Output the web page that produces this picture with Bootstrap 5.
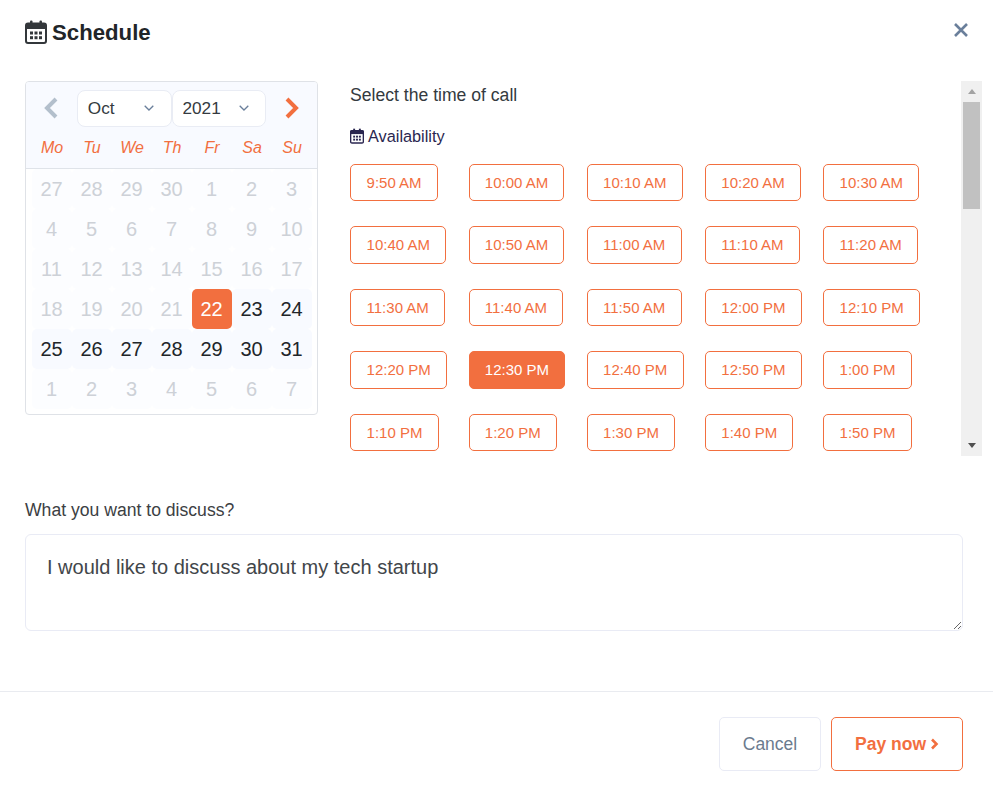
<!DOCTYPE html>
<html lang="en">
<head>
<meta charset="utf-8">
<title>Schedule</title>
<link rel="stylesheet" href="https://cdn.jsdelivr.net/npm/bootstrap@5.3.0/dist/css/bootstrap.min.css">
<style>
html,body{height:100%;background:#fff;font-family:"Liberation Sans",Arial,sans-serif;color:#212529}
.sheet{width:993px;height:794px;border:0;border-radius:0;overflow:hidden}
.sheet-head{height:64px;padding:0 25px;border:0;margin-bottom:17px}
.sheet-title{font-size:22.2px;font-weight:700;line-height:1;color:#212529;gap:5px;margin:0}
.sheet-title span{position:relative;top:1px}
.close-x{background:none;border:0;padding:0;width:16px;height:16px;margin:-14px -1px 0 0;display:block}
.sheet-body{padding:0 0 0 25px;flex:none}
.top-row{gap:32px;height:375px}
.cal{width:293px;height:334px;border:1px solid #dfe2e7;border-radius:4px;background:#fff;overflow:hidden}
.cal-top{height:87px;background:#f8faff;border-bottom:1px solid #dfe3e9;padding-top:7px}
.cal-nav{height:38px}
.cal-arrow{width:51px;height:38px;background:none;border:0;padding:0}
.cal-select{width:95px;height:37px;padding:0 0 0 10px;font-size:17.2px;line-height:35px;color:#343a40;border:1px solid #e9ecf4;border-radius:8px;background-color:#fff;background-image:url("data:image/svg+xml,%3csvg xmlns='http://www.w3.org/2000/svg' viewBox='0 0 10 6'%3e%3cpath fill='none' stroke='%236a7f9b' stroke-width='1.3' d='M.7.7 5 5 9.3.7'/%3e%3c/svg%3e");background-position:right 16.5px center;background-size:10px 6px;font-family:inherit}
.cal-week{display:grid;grid-template-columns:repeat(7,40px);padding-left:6px;margin-top:2px}
.cal-week span{text-align:center;font-style:italic;font-size:16px;line-height:38px;color:#f26f3f}
.cal-grid{display:grid;grid-template-columns:repeat(7,40px);grid-auto-rows:40px;padding-left:6px}
.day{display:flex;align-items:center;justify-content:center;font-size:20px;color:#212529;background:#f8faff;border-radius:5px;padding-right:1px}
.day.off{color:#cdd1d7;background:#fcfdff}
.day.on{background:#f26f3f;color:#fff}
.times-wrap{width:632px;height:375px}
.times{flex:1;min-width:0;overflow:hidden}
.times-h{font-size:17.6px;line-height:24px;color:#343a40;margin:2px 0 0}
.avail{font-size:16.3px;line-height:24px;color:#2a2650;gap:4px;margin:17px 0 0;height:24px}
.slots{display:grid;grid-template-columns:repeat(5,118.25px);row-gap:25px;margin:15.7px 0 0 .3px;justify-items:start}
.slot{--bs-btn-padding-x:15.25px;--bs-btn-padding-y:7.25px;--bs-btn-font-size:15px;--bs-btn-line-height:21px;--bs-btn-color:#f26f3f;--bs-btn-border-color:#f26f3f;--bs-btn-border-radius:5px;--bs-btn-bg:#fff;white-space:nowrap;font-family:inherit}
.slot.picked{background:#f26f3f;color:#fff}
.fake-bar{width:21px;background:#f0f0f0;height:375px;align-items:center;flex:none}
.bar-btn{height:21px;width:100%;display:flex;align-items:center;justify-content:center;flex:none}
.tri-up{width:0;height:0;border-left:4.5px solid transparent;border-right:4.5px solid transparent;border-bottom:5px solid #a3a3a3}
.tri-down{width:0;height:0;border-left:4.5px solid transparent;border-right:4.5px solid transparent;border-top:5px solid #505050}
.bar-thumb{width:17px;height:107px;background:#c1c1c1;flex:none}
.ask-wrap{width:938px;margin-top:42px}
.ask-label{font-size:17.6px;line-height:24px;color:#3c4043;margin:0 0 12px}
.ask{height:97px;padding:15px 21px;font-size:20px;line-height:34px;border:1px solid #e9ebf5;border-radius:6px;color:#42464a;font-family:inherit;box-shadow:none;resize:vertical}
.sheet-foot{position:static;margin-top:60px;height:103px;padding:25px 30px 23px 0;border-top:1px solid #e9ebf0;gap:10px;justify-content:flex-end;align-items:flex-start;flex-wrap:nowrap}
.sheet-foot>*{margin:0}
.act{height:54px;font-size:17.5px;border-radius:5px;padding:0;font-family:inherit}
.act-cancel{width:102px;border:1px solid #e9ebf5;color:#6b7b8e;background:#fff}
.act-pay{width:132px;border:1px solid #f26f3f;color:#f26f3f;background:#fff;font-weight:700;gap:4px}
</style>
</head>
<body>
<div class="modal-content sheet d-flex flex-column">
  <div class="modal-header sheet-head d-flex align-items-center justify-content-between">
    <h5 class="modal-title sheet-title d-flex align-items-center">
      <svg width="22" height="24" viewBox="0 0 22 24" aria-hidden="true"><rect x="1" y="3.5" width="20" height="19.5" rx="2" fill="none" stroke="#33373b" stroke-width="2"/><rect x="1" y="3.5" width="20" height="5.5" fill="#33373b"/><rect x="5" y="0.5" width="2.5" height="5" rx="1" fill="#33373b"/><rect x="14.5" y="0.5" width="2.5" height="5" rx="1" fill="#33373b"/><g fill="#33373b"><rect x="5" y="11.5" width="3" height="3"/><rect x="9.5" y="11.5" width="3" height="3"/><rect x="14" y="11.5" width="3" height="3"/><rect x="5" y="16.2" width="3" height="3"/><rect x="9.5" y="16.2" width="3" height="3"/><rect x="14" y="16.2" width="3" height="3"/></g></svg>
      <span>Schedule</span>
    </h5>
    <button class="close-x" type="button" aria-label="Close"><svg width="16" height="16" viewBox="0 0 16 16" aria-hidden="true"><path d="M2 2 14 14M14 2 2 14" stroke="#6a7f9b" stroke-width="2.6" fill="none"/></svg></button>
  </div>
  <div class="modal-body sheet-body">
    <div class="d-flex top-row">
      <div class="cal flex-shrink-0">
        <div class="cal-top">
          <div class="cal-nav d-flex align-items-center">
            <button class="cal-arrow d-flex align-items-center justify-content-center" type="button" aria-label="Previous month"><svg width="16" height="22" viewBox="0 0 16 22" aria-hidden="true"><path d="M13 2 4 11l9 9" fill="none" stroke="#b3bfcc" stroke-width="4"/></svg></button>
            <select class="form-select cal-select"><option>Oct</option></select>
            <select class="form-select cal-select"><option>2021</option></select>
            <button class="cal-arrow d-flex align-items-center justify-content-center" type="button" aria-label="Next month"><svg width="16" height="22" viewBox="0 0 16 22" aria-hidden="true"><path d="M3 2l9 9-9 9" fill="none" stroke="#f26f3f" stroke-width="4"/></svg></button>
          </div>
          <div class="cal-week"><span>Mo</span><span>Tu</span><span>We</span><span>Th</span><span>Fr</span><span>Sa</span><span>Su</span></div>
        </div>
        <div class="cal-grid">
          <div class="day off">27</div><div class="day off">28</div><div class="day off">29</div><div class="day off">30</div><div class="day off">1</div><div class="day off">2</div><div class="day off">3</div>
          <div class="day off">4</div><div class="day off">5</div><div class="day off">6</div><div class="day off">7</div><div class="day off">8</div><div class="day off">9</div><div class="day off">10</div>
          <div class="day off">11</div><div class="day off">12</div><div class="day off">13</div><div class="day off">14</div><div class="day off">15</div><div class="day off">16</div><div class="day off">17</div>
          <div class="day off">18</div><div class="day off">19</div><div class="day off">20</div><div class="day off">21</div><div class="day on">22</div><div class="day">23</div><div class="day">24</div>
          <div class="day">25</div><div class="day">26</div><div class="day">27</div><div class="day">28</div><div class="day">29</div><div class="day">30</div><div class="day">31</div>
          <div class="day off">1</div><div class="day off">2</div><div class="day off">3</div><div class="day off">4</div><div class="day off">5</div><div class="day off">6</div><div class="day off">7</div>
        </div>
      </div>
      <div class="d-flex times-wrap">
        <div class="times">
          <p class="times-h">Select the time of call</p>
          <p class="avail d-flex align-items-center"><svg width="14" height="16" viewBox="0 0 22 24" aria-hidden="true"><rect x="1" y="3.5" width="20" height="19.5" rx="2" fill="none" stroke="#2a2650" stroke-width="2.2"/><rect x="1" y="3.5" width="20" height="5.5" fill="#2a2650"/><rect x="5" y="0.5" width="3" height="5" fill="#2a2650"/><rect x="14" y="0.5" width="3" height="5" fill="#2a2650"/><g fill="#2a2650"><rect x="5" y="11.5" width="3" height="3"/><rect x="9.5" y="11.5" width="3" height="3"/><rect x="14" y="11.5" width="3" height="3"/><rect x="5" y="16.2" width="3" height="3"/><rect x="9.5" y="16.2" width="3" height="3"/><rect x="14" y="16.2" width="3" height="3"/></g></svg>Availability</p>
          <div class="slots">
            <button type="button" class="btn btn-outline-primary slot">9:50 AM</button>
            <button type="button" class="btn btn-outline-primary slot">10:00 AM</button>
            <button type="button" class="btn btn-outline-primary slot">10:10 AM</button>
            <button type="button" class="btn btn-outline-primary slot">10:20 AM</button>
            <button type="button" class="btn btn-outline-primary slot">10:30 AM</button>
            <button type="button" class="btn btn-outline-primary slot">10:40 AM</button>
            <button type="button" class="btn btn-outline-primary slot">10:50 AM</button>
            <button type="button" class="btn btn-outline-primary slot">11:00 AM</button>
            <button type="button" class="btn btn-outline-primary slot">11:10 AM</button>
            <button type="button" class="btn btn-outline-primary slot">11:20 AM</button>
            <button type="button" class="btn btn-outline-primary slot">11:30 AM</button>
            <button type="button" class="btn btn-outline-primary slot">11:40 AM</button>
            <button type="button" class="btn btn-outline-primary slot">11:50 AM</button>
            <button type="button" class="btn btn-outline-primary slot">12:00 PM</button>
            <button type="button" class="btn btn-outline-primary slot">12:10 PM</button>
            <button type="button" class="btn btn-outline-primary slot">12:20 PM</button>
            <button type="button" class="btn btn-outline-primary slot picked">12:30 PM</button>
            <button type="button" class="btn btn-outline-primary slot">12:40 PM</button>
            <button type="button" class="btn btn-outline-primary slot">12:50 PM</button>
            <button type="button" class="btn btn-outline-primary slot">1:00 PM</button>
            <button type="button" class="btn btn-outline-primary slot">1:10 PM</button>
            <button type="button" class="btn btn-outline-primary slot">1:20 PM</button>
            <button type="button" class="btn btn-outline-primary slot">1:30 PM</button>
            <button type="button" class="btn btn-outline-primary slot">1:40 PM</button>
            <button type="button" class="btn btn-outline-primary slot">1:50 PM</button>
          </div>
        </div>
        <div class="fake-bar d-flex flex-column">
          <div class="bar-btn"><span class="tri-up"></span></div>
          <div class="bar-thumb"></div>
          <div class="flex-grow-1"></div>
          <div class="bar-btn"><span class="tri-down"></span></div>
        </div>
      </div>
    </div>
    <div class="ask-wrap">
      <label class="form-label ask-label d-block" for="ask">What you want to discuss?</label>
      <textarea class="form-control ask" id="ask">I would like to discuss about my tech startup</textarea>
    </div>
  </div>
  <div class="modal-footer sheet-foot d-flex">
    <button type="button" class="btn act act-cancel">Cancel</button>
    <button type="button" class="btn act act-pay d-flex align-items-center justify-content-center">Pay now<svg width="9" height="12" viewBox="0 0 9 12" aria-hidden="true"><path d="M2 1.5 6.5 6 2 10.5" fill="none" stroke="#f26f3f" stroke-width="2.6"/></svg></button>
  </div>
</div>
</body>
</html>
